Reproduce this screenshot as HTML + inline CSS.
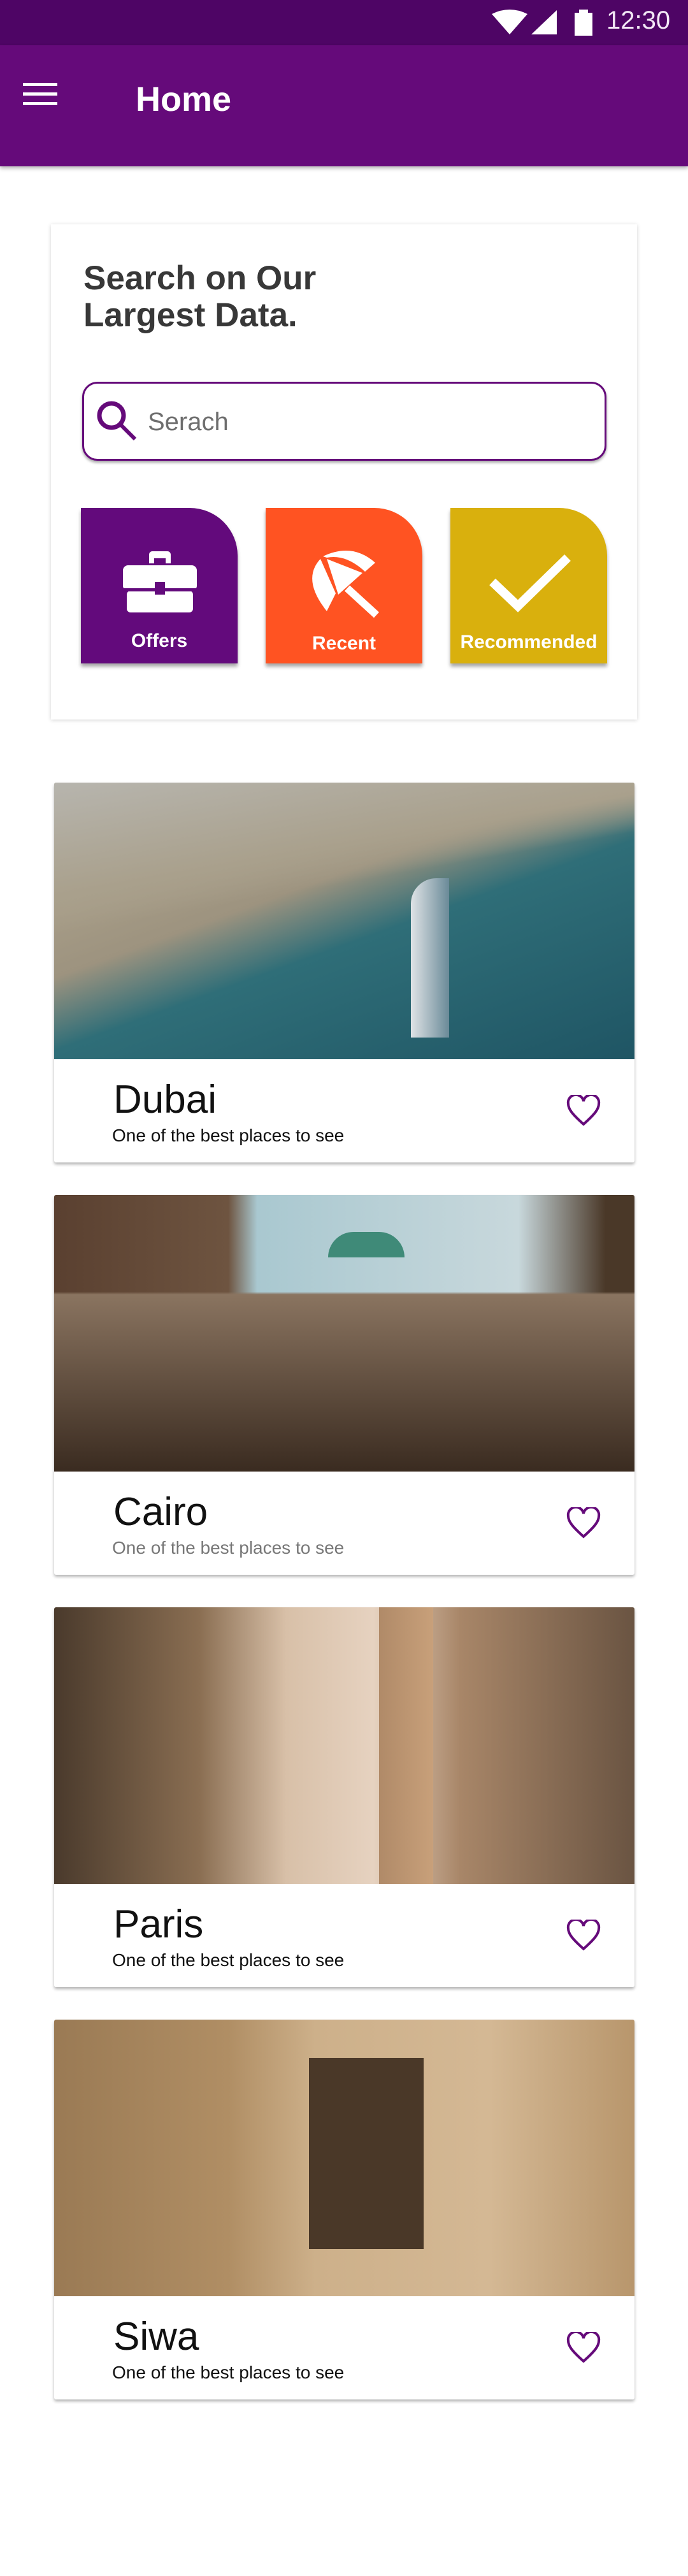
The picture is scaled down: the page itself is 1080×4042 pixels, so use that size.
<!DOCTYPE html>
<html><head><meta charset="utf-8"><style>
*{margin:0;padding:0;box-sizing:border-box}
body{width:1080px;height:4042px;background:#fff;font-family:"Liberation Sans",sans-serif;position:relative;overflow:hidden}
.abs{position:absolute}
.status{left:0;top:0;width:1080px;height:71px;background:#4e0565}
.bar{left:0;top:71px;width:1080px;height:190px;background:#650a7a;box-shadow:0 3px 6px rgba(0,0,0,.3)}
.scard{left:80px;top:352px;width:920px;height:777px;background:#fff;box-shadow:0 1px 6px rgba(0,0,0,.18)}
.btn{top:797px;width:246px;height:244px;border-top-right-radius:75px;box-shadow:0 5px 6px rgba(0,0,0,.35);color:#fff;font-weight:bold;font-size:30px;text-align:center}
.btn span{position:absolute;left:0;right:0;bottom:20px}
.card{left:85px;width:911px;height:596px;background:#fff;box-shadow:0 3px 5px rgba(0,0,0,.3);border-radius:3px;overflow:hidden}
.img{position:absolute;left:0;top:0;width:911px;height:434px}
.t{position:absolute;left:93px;top:462px;font-size:62px;color:#111}
.s{position:absolute;left:91px;top:538px;font-size:28px;color:#111}
.h{position:absolute;left:803px;top:490px}
</style></head><body>
<div class="abs status">
<svg class="abs" style="left:770px;top:14px" width="160" height="44" viewBox="0 0 160 44">
<path d="M2 8 Q30 -6 58 8 L30 40 Z" fill="#fff"/>
<path d="M64 40 L104 2 L104 40 Z" fill="#fff"/>
<rect x="132" y="6" width="28" height="36" fill="#fff"/><rect x="139" y="1" width="14" height="6" fill="#fff"/>
</svg>
<div class="abs" style="left:952px;top:10px;font-size:40px;color:#f3e8f6">12:30</div>
</div>
<div class="abs bar">
<div class="abs" style="left:36px;top:59px;width:54px;height:5px;background:#fff;box-shadow:0 15px 0 #fff,0 30px 0 #fff"></div>
<div class="abs" style="left:213px;top:54px;font-size:54px;font-weight:bold;color:#fff">Home</div>
</div>
<div class="abs scard"></div>
<div class="abs" style="left:131px;top:408px;font-size:53px;font-weight:bold;color:#383838;line-height:58px">Search on Our<br>Largest Data.</div>
<div class="abs" style="left:129px;top:599px;width:823px;height:124px;border:3px solid #650a7a;border-radius:24px;box-shadow:0 3px 4px rgba(0,0,0,.35)"></div>
<svg class="abs" style="left:148px;top:625px" width="70" height="70" viewBox="0 0 70 70"><circle cx="27" cy="27" r="19" fill="none" stroke="#650a7a" stroke-width="7"/><path d="M41 41 L64 64" stroke="#650a7a" stroke-width="6"/></svg>
<div class="abs" style="left:232px;top:640px;font-size:40px;color:#6e6e6e">Serach</div>
<div class="abs btn" style="left:127px;background:#630a7c">
<svg class="abs" style="left:66px;top:68px" width="116" height="100" viewBox="0 0 116 100"><path d="M46 0h24a5 5 0 0 1 5 5v14h-8v-8h-18v8h-8v-14a5 5 0 0 1 5-5z" fill="#fff"/><rect x="0" y="22" width="116" height="40" rx="8" fill="#fff"/><rect x="6" y="62" width="104" height="34" rx="6" fill="#fff"/><rect x="50" y="48" width="16" height="20" fill="#630a7c"/><rect x="0" y="58" width="116" height="5" fill="#630a7c"/></svg>
<span style="bottom:18px">Offers</span></div>
<div class="abs btn" style="left:417px;background:#ff5322">
<svg class="abs" style="left:66px;top:62px" width="116" height="112" viewBox="0 0 116 112"><path d="M30 100 Q-10 50 20 18 L44 72 Z" fill="#fff"/><path d="M24 14 Q70 -8 106 24 L90 38 Q60 10 30 16Z" fill="#fff"/><path d="M30 18 L86 40 L48 74 Z" fill="#fff"/><path d="M62 64 L108 106" stroke="#fff" stroke-width="12"/></svg>
<span style="bottom:14px">Recent</span></div>
<div class="abs btn" style="left:707px;background:#d9b00d">
<svg class="abs" style="left:60px;top:70px" width="130" height="100" viewBox="0 0 130 100"><path d="M6 46 L46 84 L124 8" fill="none" stroke="#fff" stroke-width="14"/></svg>
<span style="bottom:16px">Recommended</span></div>

<div class="abs card" style="top:1228px"><div class="img" style="background:linear-gradient(170deg,#b7b5ae 0%,#a9a08c 30%,rgba(0,0,0,0) 40%),linear-gradient(160deg,#b8ad96 0%,#9d937f 40%,#2f6e78 55%,#1f5564 100%)"><div style="position:absolute;left:560px;top:150px;width:60px;height:250px;background:linear-gradient(90deg,#dfe3e6,#6a8a98);border-radius:40px 0 0 0"></div></div>
<div class="t">Dubai</div><div class="s">One of the best places to see</div>
<svg class="h" width="56" height="50" viewBox="0 0 56 50"><path d="M28 46 C10 30 4 22 4 14 A11 11 0 0 1 28 10 A11 11 0 0 1 52 14 C52 22 46 30 28 46Z" fill="none" stroke="#650a7a" stroke-width="4"/></svg></div>

<div class="abs card" style="top:1875px"><div class="img" style="background:linear-gradient(180deg,rgba(0,0,0,0) 0%,rgba(0,0,0,0) 35%,#8a7460 36%,#3a2b20 100%),linear-gradient(90deg,#5a4030 0%,#6e5440 30%,#a9c8d0 35%,#c8d8dc 80%,#4a3828 95%)"><div style="position:absolute;left:430px;top:58px;width:120px;height:40px;background:#3f8a78;border-radius:60px 60px 0 0"></div></div>
<div class="t">Cairo</div><div class="s" style="color:#777">One of the best places to see</div>
<svg class="h" width="56" height="50" viewBox="0 0 56 50"><path d="M28 46 C10 30 4 22 4 14 A11 11 0 0 1 28 10 A11 11 0 0 1 52 14 C52 22 46 30 28 46Z" fill="none" stroke="#650a7a" stroke-width="4"/></svg></div>

<div class="abs card" style="top:2522px"><div class="img" style="background:linear-gradient(90deg,#4a3a2c 0%,#8a6e52 25%,#d8c0a8 40%,#e6d2c0 55%,#a88668 70%,#6a5442 100%)"><div style="position:absolute;left:510px;top:0;width:85px;height:434px;background:linear-gradient(90deg,#b08a68,#c8a07a)"></div></div>
<div class="t">Paris</div><div class="s">One of the best places to see</div>
<svg class="h" width="56" height="50" viewBox="0 0 56 50"><path d="M28 46 C10 30 4 22 4 14 A11 11 0 0 1 28 10 A11 11 0 0 1 52 14 C52 22 46 30 28 46Z" fill="none" stroke="#650a7a" stroke-width="4"/></svg></div>

<div class="abs card" style="top:3169px"><div class="img" style="background:linear-gradient(90deg,#9a7a54 0%,#b08e64 30%,#cdb08a 45%,#d4b894 75%,#b8966c 100%)"><div style="position:absolute;left:400px;top:60px;width:180px;height:300px;background:#4a3828"></div></div>
<div class="t">Siwa</div><div class="s">One of the best places to see</div>
<svg class="h" width="56" height="50" viewBox="0 0 56 50"><path d="M28 46 C10 30 4 22 4 14 A11 11 0 0 1 28 10 A11 11 0 0 1 52 14 C52 22 46 30 28 46Z" fill="none" stroke="#650a7a" stroke-width="4"/></svg></div>
</body></html>
